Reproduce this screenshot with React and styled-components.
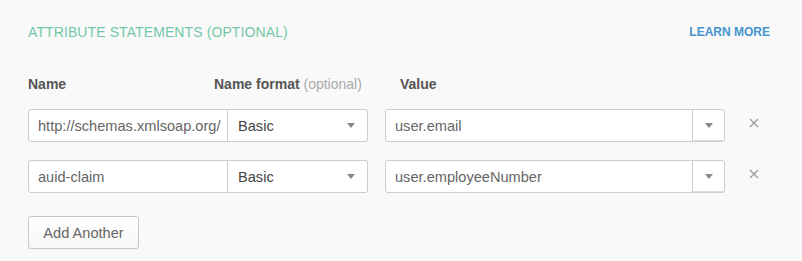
import React from 'react';
import styled, { createGlobalStyle } from 'styled-components';

const Global = createGlobalStyle`
body {
  margin: 0;
  background: #f9f9f9;
  font-family: "Liberation Sans", Arial, sans-serif;
}
`;

const Page = styled.div`
width: 802px;
box-sizing: border-box;
padding: 22px 32px 0 28px;
`;

const Header = styled.div`
display: flex;
justify-content: space-between;
align-items: center;
height: 20px;
`;

const Title = styled.h3`
margin: 0;
font-size: 14px;
font-weight: normal;
color: #72c8a8;
letter-spacing: 0.1px;
`;

const LearnMore = styled.a`
font-size: 12px;
font-weight: bold;
color: #4794cf;
text-decoration: none;
cursor: pointer;
`;

const Labels = styled.div`
display: flex;
margin-top: 32px;
height: 20px;
align-items: center;
`;

const Label = styled.span`
width: ${p => p.width ? p.width + 'px' : 'auto'};
font-size: 14px;
font-weight: bold;
color: #555;
`;

const Optional = styled.span`
font-weight: normal;
color: #aaa;
`;

const Row = styled.div`
display: flex;
align-items: center;
margin-top: ${p => p.first ? '15px' : '18px'};
`;

const TextInput = styled.div`
box-sizing: border-box;
width: 200px;
height: 33px;
padding: 0 9px;
display: flex;
align-items: center;
background: #fff;
border: 1px solid #ccc;
border-radius: 3px 0 0 3px;
font-size: 14.6px;
color: #666;
white-space: nowrap;
overflow: hidden;
`;

const Select = styled.div`
box-sizing: border-box;
width: 140px;
height: 33px;
padding: 0 12px 0 10px;
display: flex;
align-items: center;
justify-content: space-between;
background: #fff;
border: 1px solid #ccc;
border-left: none;
border-radius: 0 3px 3px 0;
font-size: 14.6px;
color: #444;
`;

const Caret = styled.span`
width: 0;
height: 0;
border-left: 4px solid transparent;
border-right: 4px solid transparent;
border-top: 5px solid #888;
`;

const Combo = styled.div`
box-sizing: border-box;
width: 340px;
height: 33px;
margin-left: 17px;
display: flex;
background: #fff;
border: 1px solid #ccc;
border-radius: 3px;
`;

const ComboText = styled.div`
flex: 1;
display: flex;
align-items: center;
padding: 0 9px;
font-size: 14.6px;
color: #666;
`;

const ComboButton = styled.div`
width: 31px;
display: flex;
align-items: center;
justify-content: center;
border-left: 1px solid #ccc;
box-shadow: inset 0 -1px 0 #ddd;
`;

const Remove = styled.button`
margin-left: 24px;
margin-top: -6px;
width: 10px;
height: 10px;
padding: 0;
border: none;
background: none;
cursor: pointer;
display: flex;
`;

const AddButton = styled.button`
box-sizing: border-box;
margin-top: 23px;
width: 111px;
height: 33px;
border: 1px solid #c8c8c8;
border-radius: 3px;
background: linear-gradient(#ffffff, #f7f7f7);
box-shadow: 0 1px 0 #ddd;
font-family: "Liberation Sans", Arial, sans-serif;
font-size: 14.6px;
color: #666;
cursor: pointer;
`;

const CloseIcon = () => (
  <svg width="10" height="10" viewBox="0 0 10 10">
    <path d="M1 1L9 9M9 1L1 9" stroke="#999" strokeWidth="1.2" />
  </svg>
);

const rows = [
  { name: 'http://schemas.xmlsoap.org/', format: 'Basic', value: 'user.email' },
  { name: 'auid-claim', format: 'Basic', value: 'user.employeeNumber' },
];

export default function App() {
  return (
    <Page>
      <Global />
      <Header>
        <Title>ATTRIBUTE STATEMENTS (OPTIONAL)</Title>
        <LearnMore>LEARN MORE</LearnMore>
      </Header>
      <Labels>
        <Label width={186}>Name</Label>
        <Label width={186}>Name format <Optional>(optional)</Optional></Label>
        <Label>Value</Label>
      </Labels>
      {rows.map((r, i) => (
        <Row key={i} first={i === 0}>
          <TextInput>{r.name}</TextInput>
          <Select>
            {r.format}
            <Caret />
          </Select>
          <Combo>
            <ComboText>{r.value}</ComboText>
            <ComboButton><Caret /></ComboButton>
          </Combo>
          <Remove><CloseIcon /></Remove>
        </Row>
      ))}
      <AddButton>Add Another</AddButton>
    </Page>
  );
}
